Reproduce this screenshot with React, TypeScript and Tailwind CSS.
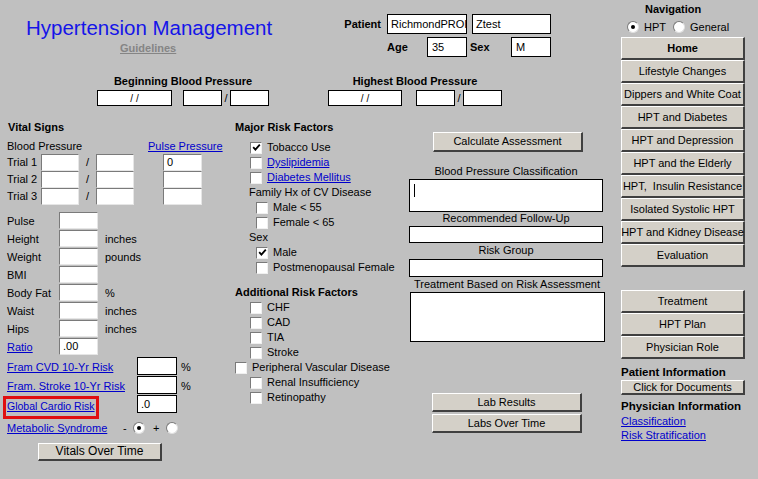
import React from "react";

const link = "text-[#0000cc] underline";

function Field({ className = "", children }: { className?: string; children?: React.ReactNode }) {
  return (
    <div className={`bg-white border border-black flex items-center px-[3px] overflow-hidden whitespace-nowrap ${className}`}>
      {children}
    </div>
  );
}

function Inset({ className = "", children }: { className?: string; children?: React.ReactNode }) {
  return (
    <div
      className={`bg-white border border-t-[#7a7a7a] border-l-[#7a7a7a] border-r-[#e6e6e6] border-b-[#e6e6e6] flex items-center px-[3px] overflow-hidden ${className}`}
    >
      {children}
    </div>
  );
}

function Check({ on }: { on?: boolean }) {
  return (
    <span className="w-[12px] h-[12px] shrink-0 bg-white border border-t-[#7a7a7a] border-l-[#7a7a7a] border-r-[#f0f0f0] border-b-[#f0f0f0] flex items-center justify-center">
      {on && (
        <svg width="9" height="9" viewBox="0 0 9 9">
          <path d="M1.2 4.2 L3.4 6.6 L7.8 1.6" fill="none" stroke="#000" strokeWidth="1.8" />
        </svg>
      )}
    </span>
  );
}

function Radio({ on }: { on?: boolean }) {
  return (
    <span className="w-[12px] h-[12px] shrink-0 rounded-full bg-white border border-t-[#7a7a7a] border-l-[#7a7a7a] border-r-[#e0e0e0] border-b-[#e0e0e0] flex items-center justify-center">
      {on && <span className="w-[4px] h-[4px] rounded-full bg-black" />}
    </span>
  );
}

function Btn({ className = "", children }: { className?: string; children: React.ReactNode }) {
  return (
    <div
      className={`bg-[#d4d0c8] border-t border-l border-t-white border-l-white border-r-2 border-b-2 border-r-[#404040] border-b-[#404040] flex items-center justify-center whitespace-nowrap ${className}`}
    >
      {children}
    </div>
  );
}

function CheckRow({ pl, on, children }: { pl: string; on?: boolean; children: React.ReactNode }) {
  return (
    <div className={`flex items-center h-[15px] ${pl}`}>
      <Check on={on} />
      <span className="ml-[5px]">{children}</span>
    </div>
  );
}

const navItems = [
  "Lifestyle Changes",
  "Dippers and White Coat",
  "HPT and Diabetes",
  "HPT and Depression",
  "HPT and the Elderly",
  "HPT,  Insulin Resistance",
  "Isolated Systolic HPT",
  "HPT and Kidney Disease",
  "Evaluation",
];

const measures: [string, string][] = [
  ["Pulse", ""],
  ["Height", "inches"],
  ["Weight", "pounds"],
  ["BMI", ""],
  ["Body Fat", "%"],
  ["Waist", "inches"],
  ["Hips", "inches"],
];

export default function App() {
  return (
    <div className="w-[758px] h-[479px] bg-[#c0c0c0] text-[11px] leading-[13px] text-black flex overflow-hidden whitespace-nowrap font-['Liberation_Sans',Arial,sans-serif]">
      <div className="w-[621px] flex flex-col">
        {/* header */}
        <div className="h-[115px] flex flex-col">
          <div className="flex h-[57px]">
            <div className="w-[330px] flex flex-col">
              <div className="ml-[26px] mt-[16px] h-[24px] text-[20.5px] leading-[24px] text-[#1515e8]">
                Hypertension Management
              </div>
              <div className="ml-[120px] mt-[2px] font-bold text-[#858585] underline">Guidelines</div>
            </div>
            <div className="flex flex-col">
              <div className="mt-[14px] flex items-center h-[20px]">
                <span className="w-[51px] text-right font-bold">Patient</span>
                <Field className="ml-[6px] w-[80px] h-[20px]">RichmondPROI</Field>
                <Field className="ml-[5px] w-[79px] h-[20px]">Ztest</Field>
              </div>
              <div className="mt-[3px] flex items-center h-[20px]">
                <span className="ml-[57px] w-[40px] font-bold">Age</span>
                <Field className="w-[40px] h-[20px] pl-[4px]">35</Field>
                <span className="ml-[3px] w-[41px] font-bold">Sex</span>
                <Field className="w-[40px] h-[20px] pl-[4px]">M</Field>
              </div>
            </div>
          </div>
          <div className="mt-[18px] flex">
            <div className="ml-[97px] w-[172px] flex flex-col items-center">
              <div className="font-bold h-[13px]">Beginning Blood Pressure</div>
              <div className="mt-[2px] flex w-full h-[16px]">
                <Field className="w-[75px] h-[16px] justify-center text-[10px]">/ /</Field>
                <Field className="ml-[11px] w-[39px] h-[16px]" />
                <span className="w-[8px] text-center leading-[16px]">/</span>
                <Field className="w-[39px] h-[16px]" />
              </div>
            </div>
            <div className="ml-[59px] w-[174px] flex flex-col items-center">
              <div className="font-bold h-[13px]">Highest Blood Pressure</div>
              <div className="mt-[2px] flex w-full h-[16px]">
                <Field className="w-[74px] h-[16px] justify-center text-[10px]">/ /</Field>
                <Field className="ml-[14px] w-[39px] h-[16px]" />
                <span className="w-[8px] text-center leading-[16px]">/</span>
                <Field className="w-[39px] h-[16px]" />
              </div>
            </div>
          </div>
        </div>

        {/* body */}
        <div className="flex flex-1">
          {/* vital signs */}
          <div className="w-[228px] flex flex-col pt-[6px]">
            <div className="pl-[8px] font-bold h-[13px]">Vital Signs</div>
            <div className="mt-[6px] flex h-[13px]">
              <span className="pl-[7px] w-[148px]">Blood Pressure</span>
              <span className={link}>Pulse Pressure</span>
            </div>
            <div className="mt-[1px] flex flex-col">
              {[1, 2, 3].map((n) => (
                <div key={n} className="flex items-center h-[17px]">
                  <span className="pl-[7px] w-[41px]">Trial {n}</span>
                  <Inset className="w-[38px] h-[17px]" />
                  <span className="w-[17px] text-center">/</span>
                  <Inset className="w-[38px] h-[17px]" />
                  <Inset className="ml-[29px] w-[39px] h-[17px]">{n === 1 ? "0" : ""}</Inset>
                </div>
              ))}
            </div>
            <div className="mt-[7px] flex flex-col">
              {measures.map(([label, unit]) => (
                <div key={label} className="flex h-[18px]">
                  <span className="pl-[7px] w-[59px] leading-[19px]">{label}</span>
                  <Inset className="w-[39px] h-[17px]" />
                  <span className="ml-[7px] leading-[19px]">{unit}</span>
                </div>
              ))}
              <div className="flex h-[18px]">
                <span className="pl-[7px] w-[59px] leading-[19px]">
                  <span className={link}>Ratio</span>
                </span>
                <Inset className="w-[39px] h-[17px]">.00</Inset>
              </div>
            </div>
            <div className="mt-[1px] flex h-[19px]">
              <span className={`ml-[7px] w-[130px] pt-[4px] ${link}`}>Fram CVD 10-Yr Risk</span>
              <Field className="w-[40px] h-[18px]" />
              <span className="ml-[4px] pt-[4px]">%</span>
            </div>
            <div className="flex h-[19px]">
              <span className={`ml-[7px] w-[130px] pt-[4px] ${link}`}>Fram. Stroke 10-Yr Risk</span>
              <Field className="w-[40px] h-[18px]" />
              <span className="ml-[4px] pt-[4px]">%</span>
            </div>
            <div className="flex h-[24px]">
              <div className="ml-[3px] mt-[1px] w-[96px] h-[23px] border-[3px] border-[#e01010] pl-[1px] leading-[15px] text-[10.5px]">
                <span className={link}>Global Cardio Risk</span>
              </div>
              <Field className="ml-[38px] w-[40px] h-[18px]">.0</Field>
            </div>
            <div className="mt-[2px] flex items-center h-[14px]">
              <span className={`ml-[7px] w-[116px] ${link}`}>
                <span>Metabolic Syndrome</span>
              </span>
              <span className="w-[10px]">-</span>
              <Radio on />
              <span className="ml-[8px] w-[13px]">+</span>
              <Radio />
            </div>
            <Btn className="mt-[8px] ml-[38px] w-[124px] h-[18px] text-[12px]">Vitals Over Time</Btn>
          </div>

          {/* risk factors */}
          <div className="w-[177px] flex flex-col pt-[6px]">
            <div className="pl-[7px] font-bold h-[13px]">Major Risk Factors</div>
            <div className="mt-[6px] flex flex-col">
              <CheckRow pl="pl-[22px]" on>Tobacco Use</CheckRow>
              <CheckRow pl="pl-[22px]">
                <span className={link}>Dyslipidemia</span>
              </CheckRow>
              <CheckRow pl="pl-[22px]">
                <span className={link}>Diabetes Mellitus</span>
              </CheckRow>
              <div className="pl-[21px] h-[15px] leading-[15px]">Family Hx of CV Disease</div>
              <CheckRow pl="pl-[28px]">Male &lt; 55</CheckRow>
              <CheckRow pl="pl-[28px]">Female &lt; 65</CheckRow>
              <div className="pl-[21px] h-[15px] leading-[15px]">Sex</div>
              <CheckRow pl="pl-[28px]" on>Male</CheckRow>
              <CheckRow pl="pl-[28px]">Postmenopausal Female</CheckRow>
            </div>
            <div className="mt-[11px] pl-[7px] font-bold h-[13px]">Additional Risk Factors</div>
            <div className="mt-[1px] flex flex-col">
              <CheckRow pl="pl-[22px]">CHF</CheckRow>
              <CheckRow pl="pl-[22px]">CAD</CheckRow>
              <CheckRow pl="pl-[22px]">TIA</CheckRow>
              <CheckRow pl="pl-[22px]">Stroke</CheckRow>
              <CheckRow pl="pl-[7px]">Peripheral Vascular Disease</CheckRow>
              <CheckRow pl="pl-[22px]">Renal Insufficiency</CheckRow>
              <CheckRow pl="pl-[22px]">Retinopathy</CheckRow>
            </div>
          </div>

          {/* assessment */}
          <div className="w-[216px] flex flex-col">
            <Btn className="ml-[28px] mt-[17px] w-[150px] h-[20px]">Calculate Assessment</Btn>
            <div className="mt-[13px] ml-[4px] w-[194px] text-center h-[13px]">Blood Pressure Classification</div>
            <div className="mt-[1px] ml-[4px] w-[194px] h-[33px] border border-black bg-white pl-[4px] pt-[4px]">
              <div className="w-px h-[13px] bg-black" />
            </div>
            <div className="ml-[4px] w-[194px] text-center h-[13px]">Recommended Follow-Up</div>
            <div className="mt-[1px] ml-[4px] w-[194px] h-[17px] border border-black bg-white" />
            <div className="mt-[1px] ml-[4px] w-[194px] text-center h-[13px]">Risk Group</div>
            <div className="mt-[2px] ml-[4px] w-[194px] h-[18px] border border-black bg-white" />
            <div className="mt-[1px] ml-[4px] w-[196px] text-center h-[13px]">Treatment Based on Risk Assessment</div>
            <div className="mt-[1px] ml-[5px] w-[195px] h-[50px] border border-black bg-white" />
            <Btn className="mt-[51px] ml-[27px] w-[150px] h-[19px]">Lab Results</Btn>
            <Btn className="mt-[2px] ml-[27px] w-[150px] h-[19px]">Labs Over Time</Btn>
          </div>
        </div>
      </div>

      {/* navigation */}
      <div className="w-[124px] flex flex-col">
        <div className="mt-[3px] pl-[24px] font-bold h-[13px]">Navigation</div>
        <div className="mt-[4px] flex items-center h-[14px] pl-[6px]">
          <Radio on />
          <span className="ml-[5px]">HPT</span>
          <span className="ml-[7px]">
            <Radio />
          </span>
          <span className="ml-[5px]">General</span>
        </div>
        <div className="mt-[3px] flex flex-col">
          <Btn className="h-[23px] border-b font-bold">Home</Btn>
          {navItems.map((t, i) => (
            <Btn key={t} className={`h-[23px] ${i === navItems.length - 1 ? "" : "border-b"}`}>
              <span className="whitespace-pre">{t}</span>
            </Btn>
          ))}
        </div>
        <div className="mt-[23px] flex flex-col">
          <Btn className="h-[23px] border-b">Treatment</Btn>
          <Btn className="h-[23px] border-b">HPT Plan</Btn>
          <Btn className="h-[23px]">Physician Role</Btn>
        </div>
        <div className="mt-[7px] font-bold h-[13px] text-[11.5px]">Patient Information</div>
        <Btn className="mt-[1px] h-[15px]">Click for Documents</Btn>
        <div className="mt-[5px] font-bold h-[13px] text-[11.5px]">Physician Information</div>
        <div className="mt-[1px] h-[14px] leading-[14px]">
          <span className={link}>Classification</span>
        </div>
        <div className="h-[14px] leading-[14px]">
          <span className={link}>Risk Stratification</span>
        </div>
      </div>
    </div>
  );
}
